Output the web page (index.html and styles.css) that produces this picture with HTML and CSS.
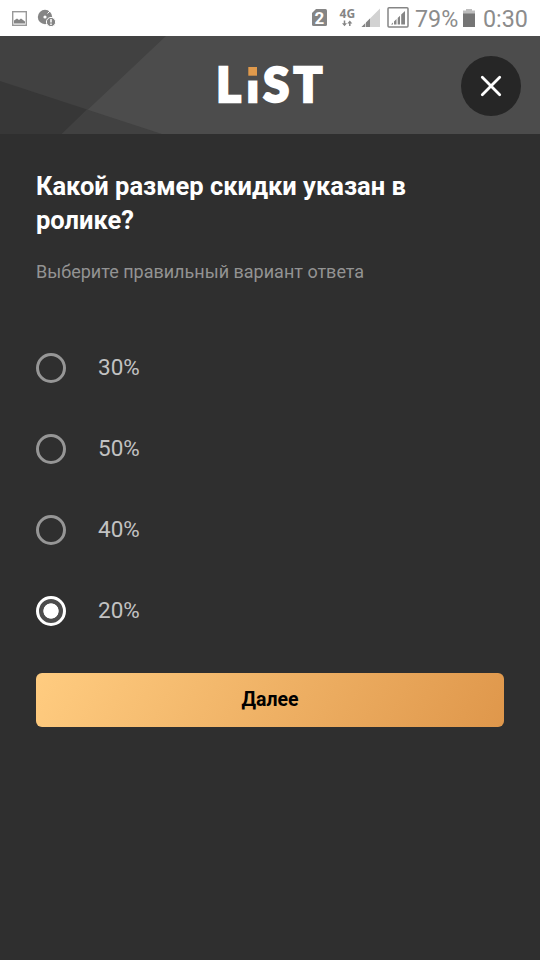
FILE: index.html
```html
<!DOCTYPE html>
<html lang="ru">
<head>
    <meta charset="UTF-8">
    <meta name="viewport" content="width=device-width, initial-scale=1.0">
    <title>LiST</title>
    <link rel="stylesheet" href="styles.css">
</head>
<body>
    <div class="status-bar">
        <svg class="status-icons" width="80" height="36" viewBox="0 0 80 36">
            <rect x="12.7" y="11.7" width="13.6" height="13.6" fill="none" stroke="#999" stroke-width="1.4"/>
            <path d="M14 23.5v-3l3-2 2 1.5 2-1.5 4 3v2z" fill="#858585"/>
            <circle cx="45" cy="17" r="7.2" fill="#858585"/>
            <circle cx="45" cy="17" r="1.6" fill="#fff"/>
            <path d="M47.5 13.500l2.500-2.500" fill="none" stroke="#fff" stroke-width="1"/>
            <circle cx="51" cy="22" r="4.6" fill="#858585" stroke="#fff" stroke-width="1"/>
            <path d="M51 19v3.5M51 23.6v1.3" stroke="#fff" stroke-width="1.5"/>
        </svg>
        <svg class="status-icons" width="115" height="36" viewBox="300 0 115 36">
            <path d="M316 9h9.500q1.500 0 1.500 1.500v14q0 1.500-1.500 1.500h-12q-1.500 0-1.500-1.500V13z" fill="#858585"/>
            <text class="sim" x="319.500" y="23.800" text-anchor="middle">2</text>
            <text class="net" x="347.300" y="18" text-anchor="middle">4G</text>
            <path d="M344.500 20.500v4M349.800 22v4" stroke="#858585" stroke-width="1.500"/>
            <path d="M342 23.300h5l-2.500 2.900zM347.300 23.500h5l-2.500-3z" fill="#858585"/>
            <path d="M361.500 27L380 8.500V27z" fill="#d2d2d2"/>
            <path d="M361.500 27l3.500-3.500V27zM366 27v-4.500l4-4V27z" fill="#858585"/>
            <rect x="388" y="7.700" width="20" height="19.300" rx="1" fill="none" stroke="#858585" stroke-width="1.500"/>
            <path d="M391 24.500l2-2v2zM394 24.500v-3l2.500-2.500v5.500zM397.700 24.500v-6.500l2.300-2.300v8.800zM401.200 24.500v-10l3.800-3.500v13.500z" fill="#858585"/>
        </svg>
        <span class="percent">79%</span>
        <svg class="battery" width="13" height="18" viewBox="0 0 13 18">
            <path d="M0 1.500h3V0h6v1.500h3V5H0z" fill="#bdbdbd"/>
            <path d="M0 4.500h12V18H0z" fill="#757575"/>
        </svg>
        <span class="clock">0:30</span>
    </div>

    <header class="header">
        <svg class="header-bg" width="540" height="98" viewBox="0 0 540 98">
            <path d="M0 0h166L62 98H0z" fill="#414141"/>
            <path d="M0 45l87 28.500L62 98H0z" fill="#373737"/>
            <path d="M87 73.500L162 98H62z" fill="#414141"/>
        </svg>
        <svg class="logo" width="130" height="80" viewBox="-10 -16 130 80">
            <text class="logo-text" y="41.300"><tspan x="1.200">L</tspan><tspan class="logo-i" x="31.200">i</tspan><tspan x="48.200">S</tspan><tspan x="78.800">T</tspan></text>
            <rect x="32" y="2" width="12" height="17.500" fill="#4c4c4c"/>
            <rect x="33.300" y="6" width="8.700" height="8.700" fill="#e09a4c"/>
        </svg>
        <button class="close" aria-label="Закрыть">
            <svg width="22" height="22" viewBox="0 0 22 22">
                <path d="M2.300 2.300l17.400 17.400M19.700 2.300L2.300 19.700" stroke="#fff" stroke-width="2.800" stroke-linecap="round"/>
            </svg>
        </button>
    </header>

    <main class="quiz">
        <h1 class="question">Какой размер скидки указан в ролике?</h1>
        <p class="hint">Выберите правильный вариант ответа</p>
        <div class="answers">
            <label class="answer"><input type="radio" name="answer"><span>30%</span></label>
            <label class="answer"><input type="radio" name="answer"><span>50%</span></label>
            <label class="answer"><input type="radio" name="answer"><span>40%</span></label>
            <label class="answer"><input type="radio" name="answer" checked><span>20%</span></label>
        </div>
        <button class="next">Далее</button>
    </main>
</body>
</html>
```

FILE: styles.css
```css
* {
    box-sizing: border-box;
}

body {
    margin: 0;
    min-height: 100vh;
    font-family: Roboto, "Noto Sans", sans-serif;
    background-color: #2f2f2f;
    color: #fff;
}

button {
    border: none;
    padding: 0;
    font-family: inherit;
    cursor: pointer;
}

/* Status bar */
.status-bar {
    display: flex;
    align-items: center;
    height: 36px;
    background-color: #fff;
    color: #8c8c8c;
    font-size: 23.3px;
    line-height: 36px;
}

.status-icons {
    flex: none;
}

.status-icons + .status-icons {
    margin-left: 220px;
}

.sim {
    font-size: 17px;
    font-weight: bold;
    fill: #fff;
}

.net {
    font: bold 12px "Noto Sans", sans-serif;
    fill: #858585;
}

.percent {
    width: 48px;
    padding-top: 2px;
}

.battery {
    margin-right: 7px;
}

.clock {
    padding-top: 2px;
}

/* Header */
.header {
    position: relative;
    display: flex;
    align-items: center;
    justify-content: center;
    height: 98px;
    background-color: #4c4c4c;
}

.header-bg {
    position: absolute;
    top: 0;
    left: 0;
}

.logo {
    position: relative;
}

.logo-text {
    font-family: Lato, sans-serif;
    font-size: 47px;
    font-weight: 900;
    fill: #fff;
    stroke: #fff;
    stroke-width: 2.6px;
}

.logo-i {
    font-family: "Liberation Sans", sans-serif;
    font-weight: bold;
}

.close {
    position: absolute;
    top: 20px;
    right: 19px;
    display: flex;
    align-items: center;
    justify-content: center;
    width: 60px;
    height: 60px;
    border-radius: 50%;
    background-color: #262626;
}

/* Quiz */
.quiz {
    padding: 35px 36px 0;
}

.question {
    margin: 0;
    font-size: 25.5px;
    line-height: 34px;
    font-weight: bold;
}

.hint {
    margin: 23px 0 0;
    font-size: 18px;
    line-height: 24px;
    color: #939393;
}

.answers {
    display: flex;
    flex-direction: column;
    gap: 51px;
    margin-top: 69px;
}

.answer {
    display: flex;
    align-items: center;
    gap: 32px;
    height: 30px;
    font-size: 22.5px;
    line-height: 28px;
    color: #c2c2c2;
}

.answer span {
    padding-bottom: 2px;
}

.answer input {
    appearance: none;
    width: 30px;
    height: 30px;
    margin: 0;
    border: 3px solid #969696;
    border-radius: 50%;
}

.answer input:checked {
    border-color: #fff;
    background: radial-gradient(circle, #fff 7.3px, #4c4c4c 8px);
}

.next {
    width: 100%;
    height: 54px;
    margin-top: 47px;
    padding-bottom: 2px;
    border-radius: 6px;
    background: linear-gradient(118deg, #ffcc80, #df974b);
    color: #000;
    font-size: 19.5px;
    font-weight: bold;
}
```
